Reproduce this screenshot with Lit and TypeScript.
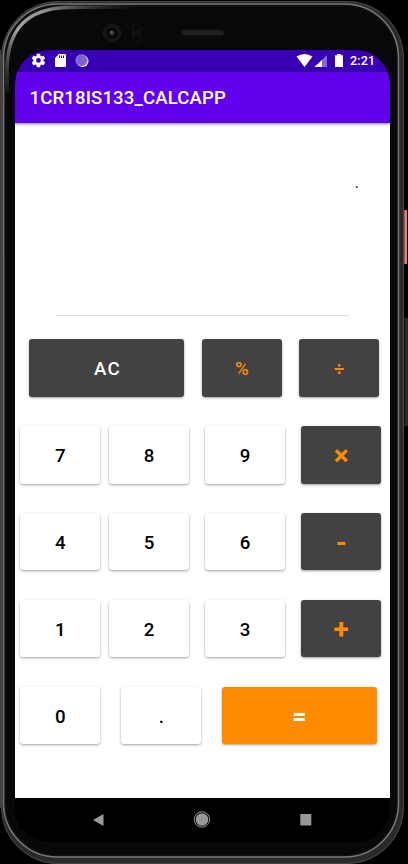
import { LitElement, html, css, svg } from "lit";
import { customElement, property } from "lit/decorators.js";

@customElement("calc-key")
class CalcKey extends LitElement {
  @property() label = "";
  @property() tone = "light";
  static styles = css`
    :host { display: block; width: 80px; height: 57.5px; }
    :host([wide]) { width: 155px; }
    .key {
      box-sizing: border-box; width: 100%; height: 100%; border: 0; padding: 2px 0 0 1.4px;
      border-radius: 3px; font: 500 18.7px/54px Roboto, sans-serif; letter-spacing: 1.4px;
      display: flex; justify-content: center; align-items: center;
      background: #fff; color: #000; box-shadow: 0 1px 2.5px rgba(0, 0, 0, 0.38);
    }
    .dark { background: #424242; color: #fff; }
    .op { background: #424242; color: #ff8b00; }
    .divide { background: #424242; color: #ff8b00; font-weight: 700; font-size: 18px; }
    .bold { background: #424242; color: #ff8b00; font-size: 28px; font-weight: 700; }
    .equals { background: #ff8b00; color: #fff; font-size: 25px; font-weight: 700; }
  `;
  render() {
    return html`<button class="key ${this.tone}">${this.label}</button>`;
  }
}

const TONES: Record<string, string> = {
  AC: "dark", "%": "op", "÷": "divide", "=": "equals", "×": "bold", "-": "bold", "+": "bold",
};

@customElement("app-root")
class AppRoot extends LitElement {
  static styles = css`
    :host { display: block; width: 408px; height: 864px; background: #000; overflow: hidden; position: relative; font-family: Roboto, sans-serif; }
    .phone { box-sizing: border-box; position: relative; height: 864px; padding: 50px 0 0 15px; }
    .hardware { position: absolute; left: 0; top: 0; }
    .screen { position: relative; width: 375px; height: 792px; border-radius: 34px; overflow: hidden; background: #000; display: flex; flex-direction: column; }
    .status { height: 22px; flex: none; background: #3700b3; display: flex; }
    .status svg { display: block; }
    .time { color: #fff; font: 500 12.5px/22px Roboto, sans-serif; letter-spacing: 0.2px; margin-left: 3px; }
    .bar { height: 50.5px; flex: none; background: #6200ee; color: #fff; font: 500 18.6px/53px Roboto, sans-serif; letter-spacing: 0.12px; padding-left: 14.5px; box-sizing: border-box; box-shadow: 0 1px 3px rgba(0, 0, 0, 0.5); z-index: 1; }
    .content { flex: 1; background: #fff; display: flex; flex-direction: column; }
    .display { height: 193.5px; margin: 0 41px; box-sizing: border-box; border-bottom: 1px solid #dcdcdc; text-align: right; }
    .value { display: block; padding-top: 53px; margin-right: -10px; font: 500 15px/15px Roboto, sans-serif; color: #444; }
    .pad { display: flex; flex-direction: column; gap: 29.4px; padding-top: 23.2px; }
    .row { display: flex; padding-left: 5.3px; }
    .row calc-key:nth-child(2) { margin-left: 8.7px; }
    .row calc-key:nth-child(3) { margin-left: 16px; }
    .row calc-key:nth-child(4) { margin-left: 16.2px; }
    .first { padding-left: 14.4px; }
    .first calc-key:nth-child(2) { margin-left: 17.6px; }
    .first calc-key:nth-child(3) { margin-left: 17.2px; }
    .last calc-key:nth-child(2) { margin-left: 21px; }
    .last calc-key:nth-child(3) { margin-left: 20.7px; }
    .nav { height: 44px; flex: none; background: #000; }
    .nav svg { display: block; }
  `;

  hardware() {
    return html`<svg class="hardware" width="408" height="864" viewBox="0 0 408 864">
      <defs>
        <linearGradient id="shine" gradientUnits="userSpaceOnUse" x1="0" x2="136" y1="92" y2="0">
          <stop offset="0" stop-color="#777" stop-opacity="0" /><stop offset=".3" stop-color="#a3a3a0" /><stop offset=".5" stop-color="#92928f" /><stop offset="1" stop-color="#333" stop-opacity="0" />
        </linearGradient>
      </defs>
      ${svg`
      <rect x="404" y="210" width="3" height="54" rx="1" fill="#ec7f6b"/><path d="M404.500 211V263" stroke="#b05446"/>
      <rect x="404" y="318" width="4" height="108" rx="1" fill="#29292b"/><path d="M404.500 320V424" stroke="#111"/>
      <path d="M.5 50V808" stroke="#3d3e40"/>
      <rect x="1" y="1" width="403" height="863" rx="57" fill="#2a2a2c"/>
      <rect x="1.500" y="1.500" width="402" height="862" rx="56.500" fill="none" stroke="#474748"/>
      <rect x="3.500" y="4" width="395" height="853" rx="54" fill="#111113" stroke="#77787b" stroke-width="1.500"/>
      <rect x="6" y="6.500" width="390.500" height="848.500" rx="52" fill="#08080a"/>
      <path d="M7 92V68C8 28 28 9 66 7.500L150 6.500" fill="none" stroke="url(#shine)" stroke-width="3.500"/>
      <circle cx="112" cy="33" r="9.500" fill="#151516"/><circle cx="112" cy="33" r="5.500" fill="#070709"/>
      <circle cx="112" cy="33" r="2.500" fill="#30343e"/><circle cx="111.500" cy="32" r="1" fill="#73798a"/>
      <rect x="132" y="23" width="9" height="20" rx="4.500" fill="#111112"/><circle cx="136.500" cy="27.500" r="3" fill="#090909"/><circle cx="136.500" cy="38.500" r="3" fill="#090909"/>
      <rect x="182" y="30" width="42" height="5.500" rx="2.500" fill="#202020" stroke="#151515"/>`}
    </svg>`;
  }

  row(keys: string[], cls = "") {
    return html`<div class="row ${cls}">${keys.map(k =>
      html`<calc-key .label=${k} .tone=${TONES[k] ?? "light"} ?wide=${k === "AC" || k === "="}></calc-key>`
    )}</div>`;
  }

  render() {
    return html`${this.hardware()}
      <div class="phone">
        <div class="screen">
          <div class="status">
            <svg width="332" height="22" viewBox="15 50 332 22">
              <g transform="translate(30.300 52.300) scale(.68)"><path fill="#fff" d="M19.430 12.980c.04-.32.07-.64.07-.98s-.03-.66-.07-.98l2.110-1.650c.19-.15.24-.42.12-.64l-2-3.460c-.12-.22-.39-.3-.61-.22l-2.490 1c-.52-.4-1.080-.73-1.690-.98l-.38-2.650A.488.488 0 0 0 14 2h-4c-.25 0-.46.18-.49.42l-.38 2.650c-.61.25-1.170.59-1.690.98l-2.490-1c-.23-.09-.49 0-.61.22l-2 3.460c-.13.22-.07.49.12.64l2.110 1.650c-.04.32-.07.65-.07.98s.03.66.07.98l-2.110 1.650c-.19.15-.24.42-.12.64l2 3.460c.12.22.39.3.61.22l2.490-1c.52.4 1.080.73 1.690.98l.38 2.650c.03.24.24.42.49.42h4c.25 0 .46-.18.49-.42l.38-2.650c.61-.25 1.170-.59 1.690-.98l2.490 1c.23.09.49 0 .61-.22l2-3.460c.12-.22.07-.49-.12-.64zM12 15.500a3.500 3.500 0 1 1 0-7 3.500 3.500 0 0 1 0 7z"/></g>
              <path fill="#fff" d="M59 54H64.700Q66 54 66 55.200V65.800Q66 67 64.800 67H56.200Q55 67 55 65.800V58Z"/>
              <path stroke="#3700b3" stroke-width="1" d="M59.500 55.500V58M61.500 55.500V58M63.500 55.500V58"/>
              <circle cx="82.500" cy="61" r="6" fill="#fff"/><circle cx="81.600" cy="60.200" r="6" fill="#8060d0"/><circle cx="81.600" cy="60.200" r="5.400" fill="none" stroke="#b5a2e4" stroke-width="1" stroke-dasharray="1 1"/>
              <path fill="#fff" d="M296.500 56.500Q304.500 51.500 312.500 56.500L304.500 67Z"/>
              <path fill="#8568d2" d="M327 55V67H314.500Z"/><path fill="#fff" d="M322 60V67H314.500Z"/>
              <path fill="#fff" d="M337 54H341V55.300H343V67H335V55.300H337Z"/>
            </svg>
            <span class="time">2:21</span>
          </div>
          <div class="bar">1CR18IS133_CALCAPP</div>
          <div class="content">
            <div class="display"><span class="value">.</span></div>
            <div class="pad">
              ${this.row(["AC", "%", "÷"], "first")}
              ${this.row(["7", "8", "9", "×"])}
              ${this.row(["4", "5", "6", "-"])}
              ${this.row(["1", "2", "3", "+"])}
              ${this.row(["0", ".", "="], "last")}
            </div>
          </div>
          <div class="nav">
            <svg width="375" height="44" viewBox="15 798 375 44"><g fill="#999"><path d="M93 820L103.500 814V826Z"/><circle cx="202" cy="819.500" r="6.300"/><circle cx="202" cy="819.500" r="7.700" fill="none" stroke="#999"/><rect x="300.300" y="814" width="11" height="11.500"/></g></svg>
          </div>
        </div>
      </div>`;
  }
}
